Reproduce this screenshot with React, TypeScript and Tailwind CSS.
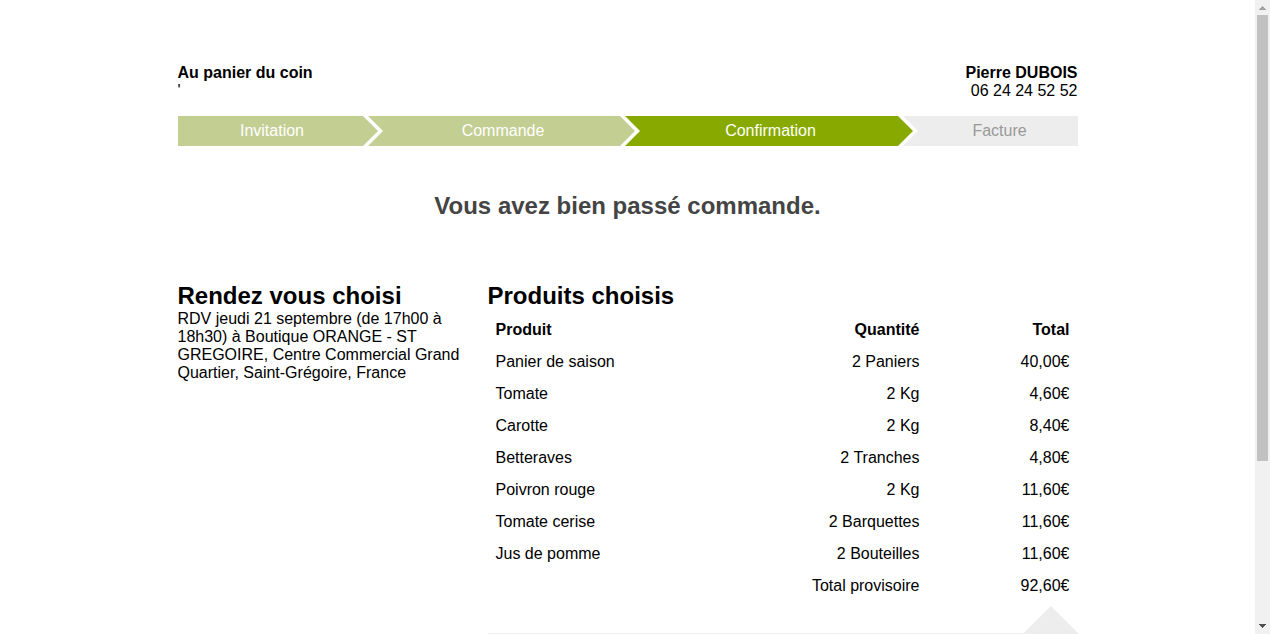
import React from "react";

type Step = { label: string; cell: string; arrow: string };

const steps: Step[] = [
  { label: "Invitation", cell: "bg-[#c3ce93] pl-1 text-white", arrow: "fill-[#c3ce93]" },
  { label: "Commande", cell: "bg-[#c3ce93] pl-6 text-white", arrow: "fill-[#c3ce93]" },
  { label: "Confirmation", cell: "bg-[#88aa00] pl-6 text-white", arrow: "fill-[#88aa00]" },
  { label: "Facture", cell: "bg-[#ededed] pl-6 text-[#999999]", arrow: "" },
];

const products = [
  { name: "Panier de saison", quantity: "2 Paniers", total: "40,00€" },
  { name: "Tomate", quantity: "2 Kg", total: "4,60€" },
  { name: "Carotte", quantity: "2 Kg", total: "8,40€" },
  { name: "Betteraves", quantity: "2 Tranches", total: "4,80€" },
  { name: "Poivron rouge", quantity: "2 Kg", total: "11,60€" },
  { name: "Tomate cerise", quantity: "2 Barquettes", total: "11,60€" },
  { name: "Jus de pomme", quantity: "2 Bouteilles", total: "11,60€" },
];

function Header() {
  return (
    <header className="flex justify-between">
      <div>
        <strong>Au panier du coin</strong>
        <p>'</p>
      </div>
      <div className="text-right">
        <strong>Pierre DUBOIS</strong>
        <p>06 24 24 52 52</p>
      </div>
    </header>
  );
}

function Steps() {
  return (
    <ol className="mt-4 grid grid-cols-[185fr_257fr_278fr_180fr]">
      {steps.map((step) => (
        <li
          key={step.label}
          aria-current={step.label === "Confirmation" ? "step" : undefined}
          className={`relative flex h-[30px] items-center justify-center ${step.cell}`}
        >
          {step.label}
          {step.arrow && (
            <svg
              className="absolute left-full top-0 z-10 h-[30px] w-5"
              viewBox="0 0 20 30"
              aria-hidden="true"
            >
              <path d="M0 0H5L20 15L5 30H0Z" className="fill-white" />
              <path d="M0 0L15 15L0 30Z" className={step.arrow} />
            </svg>
          )}
        </li>
      ))}
    </ol>
  );
}

function Products() {
  return (
    <section className="min-w-0 flex-1">
      <h2 className="text-2xl leading-7 font-bold">Produits choisis</h2>
      <table className="mt-1 w-full table-fixed">
        <colgroup>
          <col />
          <col className="w-[150px]" />
          <col className="w-[150px]" />
        </colgroup>
        <thead>
          <tr>
            <th scope="col" className="px-2 py-[7px] text-left">Produit</th>
            <th scope="col" className="px-2 py-[7px] text-right">Quantité</th>
            <th scope="col" className="px-2 py-[7px] text-right">Total</th>
          </tr>
        </thead>
        <tbody>
          {products.map((product) => (
            <tr key={product.name}>
              <td className="px-2 py-[7px]">{product.name}</td>
              <td className="px-2 py-[7px] text-right">{product.quantity}</td>
              <td className="px-2 py-[7px] text-right">{product.total}</td>
            </tr>
          ))}
        </tbody>
        <tfoot>
          <tr>
            <td className="px-2 py-[7px] text-right" colSpan={2}>Total provisoire</td>
            <td className="px-2 py-[7px] text-right">92,60€</td>
          </tr>
        </tfoot>
      </table>
      <div className="mt-1 flex justify-end border-b border-[#ededed]">
        <svg className="h-[27px] w-[54px]" viewBox="0 0 54 27" aria-hidden="true">
          <path d="M27 0L54 27H0Z" className="fill-[#ededed]" />
        </svg>
      </div>
    </section>
  );
}

function Scrollbar() {
  return (
    <div className="flex w-[15px] shrink-0 flex-col items-center bg-[#f1f1f1]" aria-hidden="true">
      <svg className="h-[15px] w-[15px] shrink-0" viewBox="0 0 15 15" shapeRendering="crispEdges">
        <path d="M7 6h1v1h1v1h1v1h1v1H4V9h1V8h1V7h1Z" className="fill-[#a3a3a3]" />
      </svg>
      <div className="min-h-0 w-full flex-1 px-0.5">
        <div className="h-[73.8%] bg-[#c1c1c1]" />
      </div>
      <svg className="h-[15px] w-[15px] shrink-0" viewBox="0 0 15 15" shapeRendering="crispEdges">
        <path d="M4 5h7v1h-1v1h-1v1h-1v1H7V8H6V7H5V6H4Z" className="fill-[#505050]" />
      </svg>
    </div>
  );
}

export default function App() {
  return (
    <div className="flex h-screen overflow-hidden bg-white font-['Liberation_Sans',Arial,sans-serif] text-base leading-[18px] text-black">
      <main className="min-w-0 flex-1 overflow-hidden">
        <div className="mx-auto max-w-[900px] pt-16">
          <Header />
          <Steps />
          <h1 className="mt-[46px] text-center text-2xl leading-[27px] font-bold text-[#444444]">
            Vous avez bien passé commande.
          </h1>
          <div className="mt-[63px] flex gap-5">
            <section className="w-[290px] shrink-0">
              <h2 className="text-2xl leading-7 font-bold">Rendez vous choisi</h2>
              <p>
                RDV jeudi 21 septembre (de 17h00 à 18h30) à Boutique ORANGE - ST GREGOIRE, Centre
                Commercial Grand Quartier, Saint-Grégoire, France
              </p>
            </section>
            <Products />
          </div>
        </div>
      </main>
      <Scrollbar />
    </div>
  );
}
